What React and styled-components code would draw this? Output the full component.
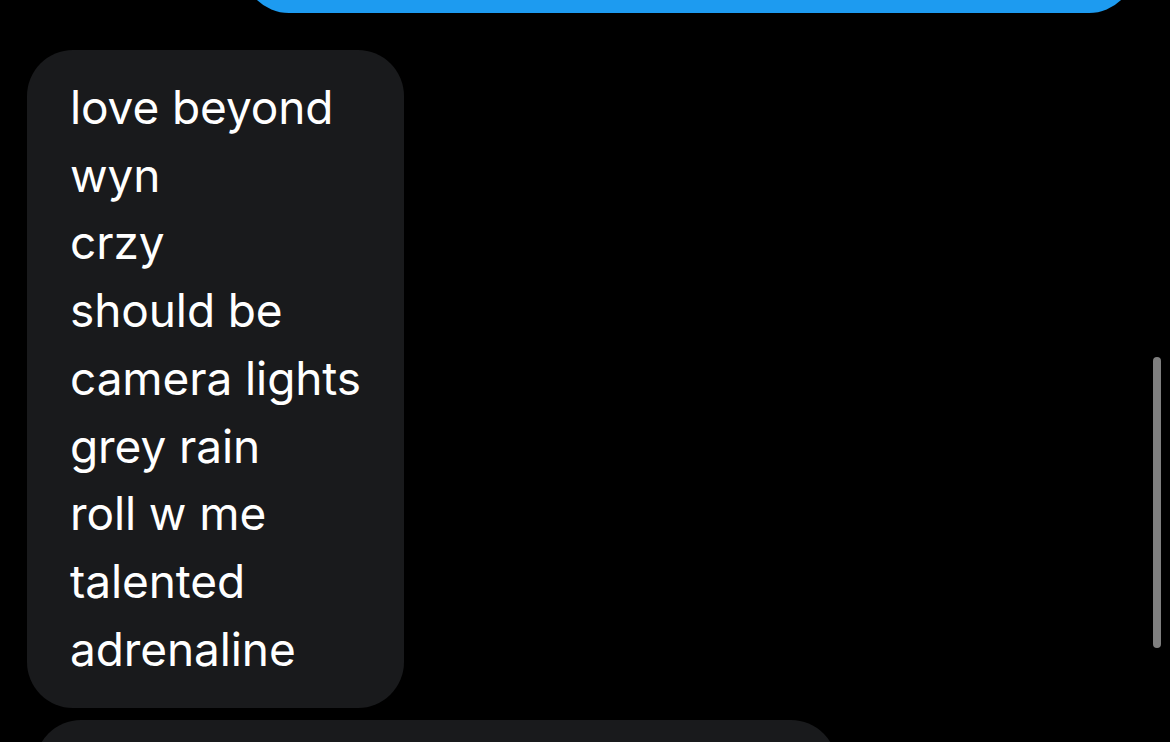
import React from "react";
import styled, { createGlobalStyle } from "styled-components";

const Global = createGlobalStyle`
  html, body { margin: 0; padding: 0; background: #000; }
  body { font-family: Inter, "Noto Sans", "Liberation Sans", sans-serif; overflow: hidden; }
`;

const Screen = styled.div`
  position: relative;
  width: 1170px;
  height: 742px;
  overflow: hidden;
  background: #000;
`;

const Thread = styled.div`
  display: flex;
  flex-direction: column;
  margin-top: -80px;
`;

const Row = styled.div`
  display: flex;
  justify-content: ${(p) => (p.$out ? "flex-end" : "flex-start")};
  padding: ${(p) => p.$pad};
  margin-top: ${(p) => p.$gap || 0}px;
`;

const Bubble = styled.div`
  background: ${(p) => (p.$out ? "#1d9bf0" : "#191a1c")};
  color: #fff;
  border-radius: 46px;
  font-size: 46px;
  line-height: 67.7px;
  letter-spacing: -0.1px;
  padding: 24px 43px 25px 43px;
  width: ${(p) => p.$w || "fit-content"};
  height: ${(p) => p.$h || "auto"};
  box-sizing: border-box;
`;

const Line = styled.div`
  white-space: nowrap;
`;

const Scrollbar = styled.div`
  position: absolute;
  right: 9px;
  top: 357px;
  width: 8px;
  height: 291px;
  border-radius: 4px;
  background: #7f7f7f;
`;

const lines = [
  "love beyond",
  "wyn",
  "crzy",
  "should be",
  "camera lights",
  "grey rain",
  "roll w me",
  "talented",
  "adrenaline",
];

export default function App() {
  return (
    <Screen>
      <Global />
      <Thread>
        <Row $out $pad="0 35px 0 0">
          <Bubble $out $w="892px" $h="93px" />
        </Row>
        <Row $pad="0 0 0 27px" $gap={37}>
          <Bubble>
            {lines.map((l) => (
              <Line key={l}>{l}</Line>
            ))}
          </Bubble>
        </Row>
        <Row $pad="0 0 0 35px" $gap={12}>
          <Bubble $w="802px" $h="120px" />
        </Row>
      </Thread>
      <Scrollbar />
    </Screen>
  );
}
